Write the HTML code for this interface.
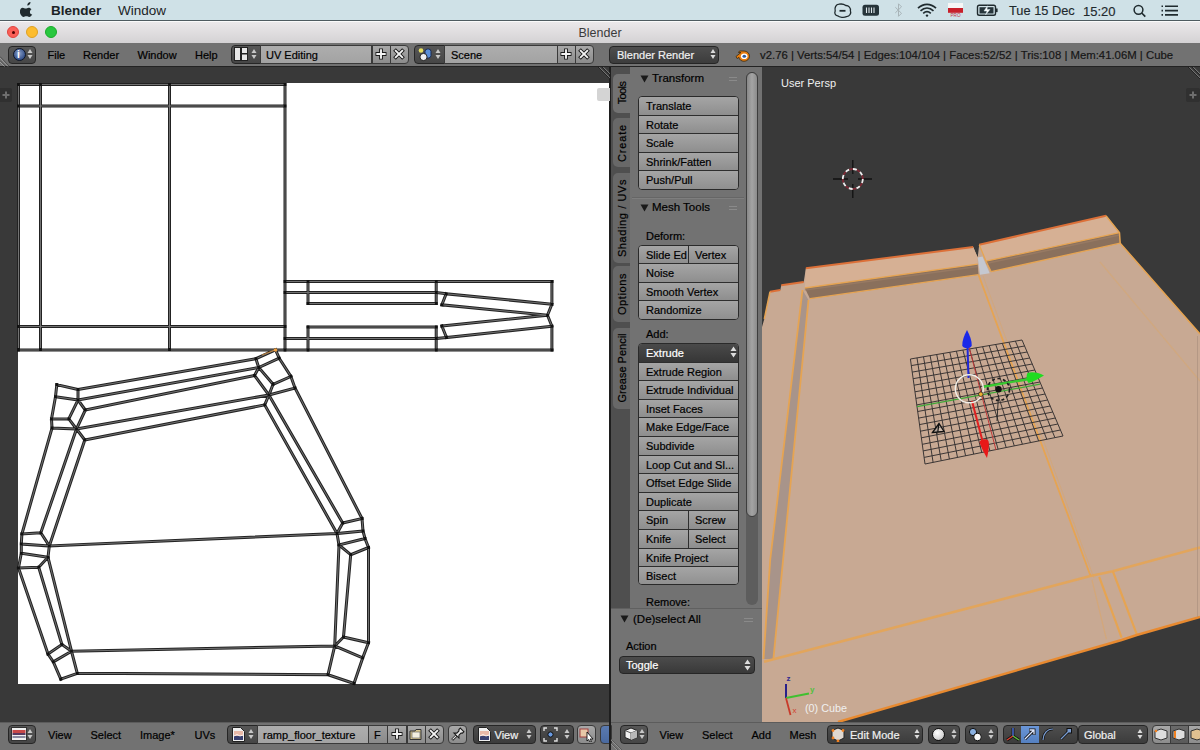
<!DOCTYPE html>
<html><head><meta charset="utf-8">
<style>
*{margin:0;padding:0;box-sizing:border-box}
html,body{width:1200px;height:750px;overflow:hidden;background:#393939;font-family:"Liberation Sans",sans-serif}
.a{position:absolute}
.t{position:absolute;white-space:nowrap;line-height:1}
.hdr{background:#727272}
.grp{position:absolute;border:1px solid #2a2a2a;border-radius:4px;overflow:hidden;background:#8f8f8f}
.grp div{position:absolute;left:0;right:0;height:18.6px;background:linear-gradient(#a5a5a5,#8e8e8e);border-bottom:1px solid #2e2e2e}
.grp span{position:absolute;left:7px;top:4px;font-size:11px;color:#000;white-space:nowrap;line-height:1;-webkit-text-stroke:0.2px currentColor}
.ht{position:absolute;font-size:11px;color:#000;white-space:nowrap;line-height:1;-webkit-text-stroke:0.2px currentColor}
.dd{position:absolute;border:1px solid #262626;border-radius:4px;background:linear-gradient(#4c4c4c,#393939)}
.fld{position:absolute;border:1px solid #3a3a3a;background:linear-gradient(#adadad,#a3a3a3)}
.ib{position:absolute;border:1px solid #3a3a3a;border-radius:4px;background:linear-gradient(#a8a8a8,#8c8c8c)}
.tab{position:absolute;left:613px;width:18px;background:#686868;border-radius:5px 0 0 5px}
.tab span{position:absolute;left:50%;top:50%;transform:translate(-50%,-50%) rotate(-90deg);font-size:11px;color:#000;-webkit-text-stroke:0.2px #000;white-space:nowrap;line-height:1}
.arr{position:absolute;width:6px;height:12px}
</style></head><body>
<!-- MENUBAR -->
<div class="a" style="left:0;top:0;width:1200px;height:21px;background:#cfe1e7;border-bottom:1px solid #4f5b60"></div>
<svg class="a" style="left:19.5px;top:1px" width="14" height="16" viewBox="0 0 14 16"><path d="M10.5 1c.1 1-.3 1.9-.9 2.6-.6.7-1.5 1.1-2.3 1-.1-.9.3-1.9.9-2.5C8.8 1.4 9.700 1 10.5 1zM13.2 11.6c-.4.9-.6 1.300-1.100 2.100-.7 1.100-1.700 2.300-2.900 2.300-1.100 0-1.300-.7-2.800-.7s-1.800.7-2.800.7C2.400 16 1.500 14.900.8 13.800-1.100 10.900.1 6.800 2.700 6.700c1.200 0 2 .8 3 .8s1.700-.8 3-.8c1 0 2.100.6 2.800 1.500-2.400 1.400-2 4.900.7 5.400z" fill="#1f2a2e"/></svg>
<div class="t" style="left:51px;top:4px;font-size:13.5px;font-weight:bold;color:#1b2326">Blender</div>
<div class="t" style="left:118px;top:4px;font-size:13.5px;color:#1b2326">Window</div>
<div class="t" style="left:1009px;top:5px;font-size:12.8px;color:#1f2a2e;-webkit-text-stroke:0.15px #1f2a2e">Tue 15 Dec</div><div class="t" style="left:1083px;top:5px;font-size:13px;color:#1f2a2e;-webkit-text-stroke:0.15px #1f2a2e">15:20</div>
<svg class="a" style="left:830px;top:0" width="175" height="20">
<path d="M9 4.2C12 3.600 14.500 4.500 15.800 5.500C18.700 5.400 21 8 20.400 10.800C21.300 13 20 16.600 16.500 16.700C14 17.800 9.500 17.500 7.600 15.800C5 15.600 4.300 13 5.200 11C4.300 7.200 6 4.600 9 4.200Z" fill="none" stroke="#1f2a2e" stroke-width="1.3"/>
<path d="M9.5 10.8H15.500" stroke="#1f2a2e" stroke-width="1.8"/>
<rect x="32.500" y="4.800" width="16.500" height="11" rx="2.500" fill="#26343a"/>
<path d="M36.500 7.500V13M39 7.500V13M41.500 7.500V13M44 7.500V13" stroke="#dfe8ec" stroke-width="1.100"/>
<path d="M65.300 7.200L71.500 13.300L68.500 16.300V3.800L71.500 6.800L65.300 12.900" fill="none" stroke="#a8b4b8" stroke-width="1"/>
<path d="M88 8.200C93.500 3 100.500 3 106 8.200" fill="none" stroke="#1f2a2e" stroke-width="1.700"/>
<path d="M90.500 10.800C94.500 7.300 99.500 7.300 103.500 10.800" fill="none" stroke="#1f2a2e" stroke-width="1.700"/>
<path d="M93.200 13.300C95.600 11.300 98.400 11.300 100.800 13.300" fill="none" stroke="#1f2a2e" stroke-width="1.700"/>
<circle cx="97" cy="15.600" r="1.200" fill="#1f2a2e"/>
<rect x="118" y="3" width="15" height="5" fill="#f6f6f6"/>
<rect x="118" y="8" width="15" height="4.800" fill="#c8202a"/>
<text x="125.500" y="17.300" font-size="4.600" font-family="Liberation Sans" fill="#c03040" text-anchor="middle">PRO</text>
<rect x="147.500" y="5.300" width="18" height="10" rx="1.800" fill="none" stroke="#1f2a2e" stroke-width="1.400"/>
<rect x="166" y="8.500" width="1.600" height="3.600" fill="#1f2a2e"/>
<path d="M149.500 7.200H163.500V13.500H149.500Z" fill="#26343a"/>
<path d="M157.500 5.800L154 11H157L155.500 15L160 9.500H157Z" fill="#fff" stroke="#cfe1e7" stroke-width="0.500"/>
</svg>
<svg class="a" style="left:1130px;top:2px" width="52" height="18">
<circle cx="8.500" cy="7.800" r="4.400" fill="none" stroke="#1f2a2e" stroke-width="1.500"/>
<path d="M11.700 11L15.300 14.600" stroke="#1f2a2e" stroke-width="1.700"/>
<path d="M35 4.300H48M35 8.600H48M35 12.900H48" stroke="#1f2a2e" stroke-width="1.600"/>
<path d="M31.500 4.300H33M31.500 8.600H33M31.500 12.900H33" stroke="#1f2a2e" stroke-width="1.600"/>
</svg>

<!-- TITLEBAR -->
<div class="a" style="left:0;top:21px;width:1200px;height:22px;background:linear-gradient(#ebe8ea,#d4d2d4);border-top:1px solid #fafafa"></div>
<div class="a" style="left:7px;top:26px;width:12px;height:12px;border-radius:50%;background:#fb5f57;border:1px solid #e0443e"></div>
<div class="a" style="left:11.5px;top:30.5px;width:3px;height:3px;border-radius:50%;background:#4d0000"></div>
<div class="a" style="left:26px;top:26px;width:12px;height:12px;border-radius:50%;background:#fdbc2e;border:1px solid #dea123"></div>
<div class="a" style="left:44.5px;top:26px;width:12px;height:12px;border-radius:50%;background:#29c73f;border:1px solid #1aab29"></div>
<div class="t" style="left:0;width:1200px;text-align:center;top:27px;font-size:12.5px;color:#3a3a3a;padding-left:-2px">Blender</div>
<!-- TOP HEADER -->
<div class="a hdr" style="left:0;top:43px;width:1200px;height:24px;border-bottom:1px solid #232323"></div>
<!-- corner split widget -->
<svg class="a" style="left:0;top:54px" width="12" height="13"><path d="M0 2.5L9 12M0 6.5L5.5 12" stroke="#4e4e4e" stroke-width="1"/><path d="M0 4L8 12.5M0 8L4.5 12.5" stroke="#a0a0a0" stroke-width="0.9"/></svg>
<!-- info editor btn -->
<div class="dd" style="left:8px;top:45.5px;width:28px;height:18px;background:linear-gradient(#575757,#464646)"></div>
<div class="a" style="left:12.5px;top:48px;width:13px;height:13px;border-radius:50%;background:radial-gradient(circle at 45% 40%,#8aa0c8,#34508a 70%);border:1.5px solid #0e1628"></div>
<div class="t" style="left:17px;top:49.5px;font-size:10px;font-weight:bold;color:#fff">i</div>
<svg class="a" style="left:27px;top:48px" width="6" height="12"><path d="M0.5 5L3 1L5.5 5ZM0.5 7L3 11L5.5 7Z" fill="#c8c8c8"/></svg>
<div class="ht" style="left:47.5px;top:50px">File</div>
<div class="ht" style="left:83px;top:50px">Render</div>
<div class="ht" style="left:137.5px;top:50px">Window</div>
<div class="ht" style="left:195px;top:50px">Help</div>
<!-- layout -->
<div class="dd" style="left:230.5px;top:45px;width:32px;height:18.5px;border-radius:4px 0 0 4px;background:linear-gradient(#575757,#464646)"></div>
<svg class="a" style="left:234px;top:47px" width="15" height="14"><rect x="0.5" y="0.5" width="6" height="13" fill="#e8e8e8" stroke="#222" stroke-width="1"/><rect x="7.5" y="0.5" width="6" height="6" fill="#e8e8e8" stroke="#222"/><rect x="7.5" y="7" width="6" height="6.5" fill="#e8e8e8" stroke="#222"/></svg>
<svg class="a" style="left:251px;top:48px" width="6" height="12"><path d="M0.5 5L3 1L5.5 5ZM0.5 7L3 11L5.5 7Z" fill="#c8c8c8"/></svg>
<div class="fld" style="left:260px;top:45px;width:112px;height:18.5px"></div>
<div class="ht" style="left:266px;top:50px">UV Editing</div>
<div class="ib" style="left:371.5px;top:45px;width:19px;height:18.5px;border-radius:0"></div>
<div class="ib" style="left:390px;top:45px;width:18.5px;height:18.5px;border-radius:0 4px 4px 0"></div>
<svg class="a" style="left:374px;top:47px" width="14" height="14"><path d="M7 1.5V12.5M1.5 7H12.5" stroke="#1a1a1a" stroke-width="3.8"/><path d="M7 2.3V11.7M2.3 7H11.7" stroke="#f4f4f4" stroke-width="1.9"/></svg>
<svg class="a" style="left:392px;top:47px" width="14" height="14"><path d="M2.5 2.5L11.5 11.5M11.5 2.5L2.5 11.5" stroke="#1a1a1a" stroke-width="3.8"/><path d="M3.1 3.1L10.9 10.9M10.9 3.1L3.1 10.9" stroke="#f4f4f4" stroke-width="1.9"/></svg>
<!-- scene -->
<div class="dd" style="left:414px;top:45px;width:31px;height:18.5px;border-radius:4px 0 0 4px;background:linear-gradient(#575757,#464646)"></div>
<svg class="a" style="left:417px;top:47px" width="16" height="15"><circle cx="4" cy="3.5" r="2.3" fill="#e8e060"/><rect x="8" y="2" width="6" height="9" rx="2.5" fill="#5b8fd8" stroke="#1b2b50"/><circle cx="6.5" cy="10" r="3.6" fill="#f0f0f0" stroke="#222"/></svg>
<svg class="a" style="left:435px;top:48px" width="6" height="12"><path d="M0.5 5L3 1L5.5 5ZM0.5 7L3 11L5.5 7Z" fill="#c8c8c8"/></svg>
<div class="fld" style="left:443.5px;top:45px;width:114px;height:18.5px"></div>
<div class="ht" style="left:451px;top:50px">Scene</div>
<div class="ib" style="left:556.5px;top:45px;width:19px;height:18.5px;border-radius:0"></div>
<div class="ib" style="left:575px;top:45px;width:18.5px;height:18.5px;border-radius:0 4px 4px 0"></div>
<svg class="a" style="left:559px;top:47px" width="14" height="14"><path d="M7 1.5V12.5M1.5 7H12.5" stroke="#1a1a1a" stroke-width="3.8"/><path d="M7 2.3V11.7M2.3 7H11.7" stroke="#f4f4f4" stroke-width="1.9"/></svg>
<svg class="a" style="left:577px;top:47px" width="14" height="14"><path d="M2.5 2.5L11.5 11.5M11.5 2.5L2.5 11.5" stroke="#1a1a1a" stroke-width="3.8"/><path d="M3.1 3.1L10.9 10.9M10.9 3.1L3.1 10.9" stroke="#f4f4f4" stroke-width="1.9"/></svg>
<!-- render engine -->
<div class="dd" style="left:609px;top:45.5px;width:110px;height:18px;background:linear-gradient(#4e4e4e,#3c3c3c)"></div>
<div class="ht" style="left:617px;top:50px;color:#f0f0f0">Blender Render</div>
<svg class="a" style="left:710px;top:48px" width="6" height="12"><path d="M0.5 5L3 1L5.5 5ZM0.5 7L3 11L5.5 7Z" fill="#dcdcdc"/></svg>
<!-- blender logo -->
<svg class="a" style="left:735px;top:48px" width="16" height="14" viewBox="0 0 16 14"><path d="M1 8.5L6 4.5L3.5 4.5L4.5 3L9 3C12 3 14.5 5.3 14.5 8.2C14.5 11 12 13.3 9 13.3C6.3 13.3 4.2 11.6 3.9 9.3L2.2 10.600Z" fill="#e87d0d" stroke="#3a2a10" stroke-width="0.8"/><ellipse cx="9.2" cy="8.3" rx="3.3" ry="2.8" fill="#fff"/><ellipse cx="9.3" cy="8.3" rx="1.8" ry="1.5" fill="#2f5b9b"/></svg>
<div class="ht" style="left:760px;top:50px;font-size:11.35px;color:#161616">v2.76 | Verts:54/54 | Edges:104/104 | Faces:52/52 | Tris:108 | Mem:41.06M | Cube</div>

<!-- UV editor -->
<div class="a" style="left:0;top:67px;width:610px;height:655px;background:#393939"></div>
<div class="a" style="left:18px;top:83px;width:592px;height:601px;background:#fff"></div>
<svg width="1200" height="750" style="position:absolute;left:0;top:0">
<path d="M56.8 384.7L78.0 389.5M56.8 384.7L55.5 396.7M55.5 396.7L78.0 400.0M78.0 389.5L78.0 400.0M78.0 400.0L85.3 410.0M78.0 400.0L68.8 418.8M68.8 418.8L51.5 419.0M55.5 396.7L51.5 419.0M51.5 419.0L52.0 428.0M52.0 428.0L76.5 429.0M68.8 418.8L76.5 429.0M85.3 410.0L76.5 429.0M76.5 429.0L84.8 440.0M78.0 389.5L255.9 358.7M78.0 400.0L258.7 367.5M85.3 410.0L254.5 375.5M76.5 429.0L268.9 395.0M84.8 440.0L264.7 404.9M255.9 358.7L275.5 349.8M275.5 349.8L279.2 358.2M255.9 358.7L258.7 367.5M258.7 367.5L279.2 358.2M258.7 367.5L254.5 375.5M258.7 367.5L273.1 384.3M279.2 358.2L290.9 376.4M290.9 376.4L273.1 384.3M273.1 384.3L268.9 395.0M290.9 376.4L295.0 388.0M295.0 388.0L268.9 395.0M254.5 375.5L268.9 395.0M268.9 395.0L264.7 404.9M295.0 388.0L362.0 518.5M268.9 395.0L342.7 523.0M264.7 404.9L337.0 533.5M362.0 518.5L342.7 523.0M362.0 518.5L363.0 531.0M342.7 523.0L337.0 533.5M337.0 533.5L363.0 531.0M363.0 531.0L365.0 538.5M337.0 533.5L339.0 545.0M339.0 545.0L365.0 538.5M365.0 538.5L368.5 547.5M339.0 545.0L350.7 554.7M350.7 554.7L368.5 547.5M350.7 554.7L343.5 637.0M368.5 547.5L368.5 642.7M339.0 545.0L334.7 646.0M343.5 637.0L368.5 642.7M343.5 637.0L334.7 646.0M334.7 646.0L362.7 657.9M368.5 642.7L362.7 657.9M334.7 646.0L328.0 674.7M362.7 657.9L354.0 683.5M328.0 674.7L354.0 683.5M52.0 428.0L21.9 534.0M76.5 429.0L40.8 532.8M84.8 440.0L49.3 545.9M21.9 534.0L40.8 532.8M21.9 534.0L21.3 544.0M40.8 532.8L49.3 545.9M21.3 544.0L49.3 545.9M21.3 544.0L21.3 553.3M49.3 545.9L48.0 557.3M21.3 553.3L48.0 557.3M21.3 553.3L18.5 568.0M48.0 557.3L38.7 567.2M18.5 568.0L38.7 567.2M18.5 568.0L48.0 654.0M38.7 567.2L61.9 644.5M48.0 557.3L71.5 651.2M61.9 644.5L71.5 651.2M61.9 644.5L48.0 654.0M48.0 654.0L53.3 661.9M71.5 651.2L53.3 661.9M53.3 661.9L60.8 679.2M71.5 651.2L77.3 673.3M60.8 679.2L77.3 673.3M49.3 545.9L337.0 533.5M71.5 651.2L334.7 646.0M77.3 673.3L328.0 674.7M436.2 292.5L446.2 293.8M446.2 293.8L551.9 304.2M446.2 293.8L441.9 304.8M441.9 304.8L547.5 315.2M551.9 304.2L547.5 315.2M547.5 315.2L551.9 326.2M547.5 315.2L441.9 326.0M441.9 326.0L446.5 337.5M446.5 337.5L551.9 326.2M436.2 338.5L446.5 337.5M18.5 84.5L18.5 349.5M40.5 84.5L40.5 349.5M169.5 84.5L169.5 349.5M285.0 84.5L285.0 350.0M18.5 84.5L285.0 84.5M18.5 106.0L285.0 106.0M18.5 326.5L285.0 326.5M18.5 350.0L552.0 350.0M285.0 281.5L552.0 281.5M285.0 292.5L436.2 292.5M308.0 303.5L436.2 303.5M308.0 327.0L436.2 327.0M285.0 338.5L436.2 338.5M308.0 281.5L308.0 303.5M308.0 327.0L308.0 350.0M436.2 281.5L436.2 303.5M436.2 327.0L436.2 350.0M551.9 281.5L551.9 304.2M551.9 326.2L551.9 350.0" stroke="#222" stroke-width="3" fill="none" stroke-linecap="square"/>
<path d="M56.8 384.7L78.0 389.5M56.8 384.7L55.5 396.7M55.5 396.7L78.0 400.0M78.0 389.5L78.0 400.0M78.0 400.0L85.3 410.0M78.0 400.0L68.8 418.8M68.8 418.8L51.5 419.0M55.5 396.7L51.5 419.0M51.5 419.0L52.0 428.0M52.0 428.0L76.5 429.0M68.8 418.8L76.5 429.0M85.3 410.0L76.5 429.0M76.5 429.0L84.8 440.0M78.0 389.5L255.9 358.7M78.0 400.0L258.7 367.5M85.3 410.0L254.5 375.5M76.5 429.0L268.9 395.0M84.8 440.0L264.7 404.9M255.9 358.7L275.5 349.8M275.5 349.8L279.2 358.2M255.9 358.7L258.7 367.5M258.7 367.5L279.2 358.2M258.7 367.5L254.5 375.5M258.7 367.5L273.1 384.3M279.2 358.2L290.9 376.4M290.9 376.4L273.1 384.3M273.1 384.3L268.9 395.0M290.9 376.4L295.0 388.0M295.0 388.0L268.9 395.0M254.5 375.5L268.9 395.0M268.9 395.0L264.7 404.9M295.0 388.0L362.0 518.5M268.9 395.0L342.7 523.0M264.7 404.9L337.0 533.5M362.0 518.5L342.7 523.0M362.0 518.5L363.0 531.0M342.7 523.0L337.0 533.5M337.0 533.5L363.0 531.0M363.0 531.0L365.0 538.5M337.0 533.5L339.0 545.0M339.0 545.0L365.0 538.5M365.0 538.5L368.5 547.5M339.0 545.0L350.7 554.7M350.7 554.7L368.5 547.5M350.7 554.7L343.5 637.0M368.5 547.5L368.5 642.7M339.0 545.0L334.7 646.0M343.5 637.0L368.5 642.7M343.5 637.0L334.7 646.0M334.7 646.0L362.7 657.9M368.5 642.7L362.7 657.9M334.7 646.0L328.0 674.7M362.7 657.9L354.0 683.5M328.0 674.7L354.0 683.5M52.0 428.0L21.9 534.0M76.5 429.0L40.8 532.8M84.8 440.0L49.3 545.9M21.9 534.0L40.8 532.8M21.9 534.0L21.3 544.0M40.8 532.8L49.3 545.9M21.3 544.0L49.3 545.9M21.3 544.0L21.3 553.3M49.3 545.9L48.0 557.3M21.3 553.3L48.0 557.3M21.3 553.3L18.5 568.0M48.0 557.3L38.7 567.2M18.5 568.0L38.7 567.2M18.5 568.0L48.0 654.0M38.7 567.2L61.9 644.5M48.0 557.3L71.5 651.2M61.9 644.5L71.5 651.2M61.9 644.5L48.0 654.0M48.0 654.0L53.3 661.9M71.5 651.2L53.3 661.9M53.3 661.9L60.8 679.2M71.5 651.2L77.3 673.3M60.8 679.2L77.3 673.3M49.3 545.9L337.0 533.5M71.5 651.2L334.7 646.0M77.3 673.3L328.0 674.7M436.2 292.5L446.2 293.8M446.2 293.8L551.9 304.2M446.2 293.8L441.9 304.8M441.9 304.8L547.5 315.2M551.9 304.2L547.5 315.2M547.5 315.2L551.9 326.2M547.5 315.2L441.9 326.0M441.9 326.0L446.5 337.5M446.5 337.5L551.9 326.2M436.2 338.5L446.5 337.5M18.5 84.5L18.5 349.5M40.5 84.5L40.5 349.5M169.5 84.5L169.5 349.5M285.0 84.5L285.0 350.0M18.5 84.5L285.0 84.5M18.5 106.0L285.0 106.0M18.5 326.5L285.0 326.5M18.5 350.0L552.0 350.0M285.0 281.5L552.0 281.5M285.0 292.5L436.2 292.5M308.0 303.5L436.2 303.5M308.0 327.0L436.2 327.0M285.0 338.5L436.2 338.5M308.0 281.5L308.0 303.5M308.0 327.0L308.0 350.0M436.2 281.5L436.2 303.5M436.2 327.0L436.2 350.0M551.9 281.5L551.9 304.2M551.9 326.2L551.9 350.0" stroke="#727272" stroke-width="1" fill="none" stroke-linecap="butt"/>
<path d="M277.8 356.8h2.8v2.8h-2.8zM337.6 543.6h2.8v2.8h-2.8zM283.6 280.1h2.8v2.8h-2.8zM83.4 438.6h2.8v2.8h-2.8zM267.5 393.6h2.8v2.8h-2.8zM289.5 375.0h2.8v2.8h-2.8zM253.1 374.1h2.8v2.8h-2.8zM46.6 555.9h2.8v2.8h-2.8zM283.6 337.1h2.8v2.8h-2.8zM17.1 325.1h2.8v2.8h-2.8zM283.6 83.1h2.8v2.8h-2.8zM50.6 426.6h2.8v2.8h-2.8zM50.1 417.6h2.8v2.8h-2.8zM59.4 677.8h2.8v2.8h-2.8zM367.1 546.1h2.8v2.8h-2.8zM263.3 403.5h2.8v2.8h-2.8zM333.3 644.6h2.8v2.8h-2.8zM83.9 408.6h2.8v2.8h-2.8zM17.1 348.1h2.8v2.8h-2.8zM39.4 531.4h2.8v2.8h-2.8zM440.5 324.6h2.8v2.8h-2.8zM70.1 649.8h2.8v2.8h-2.8zM54.1 395.3h2.8v2.8h-2.8zM550.5 324.9h2.8v2.8h-2.8zM37.3 565.8h2.8v2.8h-2.8zM168.1 83.1h2.8v2.8h-2.8zM17.1 566.6h2.8v2.8h-2.8zM550.6 348.6h2.8v2.8h-2.8zM75.1 427.6h2.8v2.8h-2.8zM168.1 348.1h2.8v2.8h-2.8zM283.6 325.1h2.8v2.8h-2.8zM434.9 348.6h2.8v2.8h-2.8zM20.5 532.6h2.8v2.8h-2.8zM283.6 291.1h2.8v2.8h-2.8zM306.6 302.1h2.8v2.8h-2.8zM17.1 104.6h2.8v2.8h-2.8zM363.6 537.1h2.8v2.8h-2.8zM39.1 83.1h2.8v2.8h-2.8zM550.6 280.1h2.8v2.8h-2.8zM367.1 641.3h2.8v2.8h-2.8zM257.3 366.1h2.8v2.8h-2.8zM326.6 673.3h2.8v2.8h-2.8zM434.9 325.6h2.8v2.8h-2.8zM335.6 532.1h2.8v2.8h-2.8zM434.9 280.1h2.8v2.8h-2.8zM75.9 671.9h2.8v2.8h-2.8zM271.7 382.9h2.8v2.8h-2.8zM434.9 337.1h2.8v2.8h-2.8zM434.9 291.1h2.8v2.8h-2.8zM283.6 104.6h2.8v2.8h-2.8zM360.6 517.1h2.8v2.8h-2.8zM46.6 652.6h2.8v2.8h-2.8zM17.1 348.6h2.8v2.8h-2.8zM341.3 521.6h2.8v2.8h-2.8zM55.4 383.3h2.8v2.8h-2.8zM19.9 551.9h2.8v2.8h-2.8zM47.9 544.5h2.8v2.8h-2.8zM361.6 529.6h2.8v2.8h-2.8zM19.9 542.6h2.8v2.8h-2.8zM76.6 388.1h2.8v2.8h-2.8zM349.3 553.3h2.8v2.8h-2.8zM254.5 357.3h2.8v2.8h-2.8zM39.1 348.1h2.8v2.8h-2.8zM51.9 660.5h2.8v2.8h-2.8zM352.6 682.1h2.8v2.8h-2.8zM60.5 643.1h2.8v2.8h-2.8zM306.6 348.6h2.8v2.8h-2.8zM550.5 348.6h2.8v2.8h-2.8zM440.5 303.4h2.8v2.8h-2.8zM76.6 398.6h2.8v2.8h-2.8zM550.5 302.9h2.8v2.8h-2.8zM67.4 417.4h2.8v2.8h-2.8zM445.1 336.1h2.8v2.8h-2.8zM444.9 292.4h2.8v2.8h-2.8zM361.3 656.5h2.8v2.8h-2.8zM283.6 348.6h2.8v2.8h-2.8zM293.6 386.6h2.8v2.8h-2.8zM306.6 325.6h2.8v2.8h-2.8zM274.1 348.4h2.8v2.8h-2.8zM306.6 280.1h2.8v2.8h-2.8zM546.1 313.9h2.8v2.8h-2.8zM17.1 83.1h2.8v2.8h-2.8zM434.9 302.1h2.8v2.8h-2.8zM342.1 635.6h2.8v2.8h-2.8zM550.5 280.1h2.8v2.8h-2.8z" fill="#111"/>
<path d="M275.5 349.8L262 355" stroke="#d08a3a" stroke-width="1.2" opacity="0.8"/><circle cx="275.5" cy="350" r="1.8" fill="#f0a040"/>
</svg>
<!-- BOTTOM HEADER -->
<div class="a hdr" style="left:0;top:722px;width:1200px;height:28px;border-top:1px solid #5c5c5c"></div>
<!-- UV editor header -->
<div class="dd" style="left:8px;top:725px;width:28px;height:18.5px;background:linear-gradient(#575757,#464646)"></div>
<svg class="a" style="left:11px;top:727px" width="16" height="14"><rect x="0.5" y="0.5" width="15" height="13" fill="#f0f0f0" stroke="#333"/><rect x="1.5" y="3" width="13" height="3" fill="#c84848"/><rect x="1.5" y="6" width="13" height="2" fill="#5a3a60"/><rect x="1.5" y="9" width="13" height="2" fill="#8a8aa0"/></svg>
<svg class="a" style="left:27px;top:728px" width="6" height="12"><path d="M0.5 5L3 1L5.5 5ZM0.5 7L3 11L5.5 7Z" fill="#c8c8c8"/></svg>
<div class="ht" style="left:48px;top:730px">View</div>
<div class="ht" style="left:90.5px;top:730px">Select</div>
<div class="ht" style="left:140px;top:730px">Image*</div>
<div class="ht" style="left:194.5px;top:730px">UVs</div>
<div class="dd" style="left:226.5px;top:725px;width:32px;height:18.5px;border-radius:4px 0 0 4px;background:linear-gradient(#575757,#464646)"></div>
<svg class="a" style="left:232px;top:727px" width="13" height="15"><path d="M0.5 0.5H8.5L12.5 4.5V14.5H0.5Z" fill="#f0f0f0" stroke="#222"/><rect x="2" y="4" width="9" height="5" fill="#e8b8a8"/><rect x="2" y="9" width="9" height="4" fill="#3a4070"/><path d="M2 9L5 7.5L8 9L11 8" stroke="#fff" stroke-width="0.8" fill="none"/></svg>
<svg class="a" style="left:248px;top:728px" width="6" height="12"><path d="M0.5 5L3 1L5.5 5ZM0.5 7L3 11L5.5 7Z" fill="#c8c8c8"/></svg>
<div class="fld" style="left:257px;top:725px;width:112px;height:18.5px"></div>
<div class="ht" style="left:263px;top:730px">ramp_floor_texture</div>
<div class="ib" style="left:368px;top:725px;width:19.5px;height:18.5px;border-radius:0;background:linear-gradient(#9c9c9c,#8a8a8a)"></div>
<div class="ht" style="left:374px;top:730px">F</div>
<div class="ib" style="left:387px;top:725px;width:20px;height:18.5px;border-radius:0"></div>
<div class="ib" style="left:406.5px;top:725px;width:19px;height:18.5px;border-radius:0"></div>
<div class="ib" style="left:425px;top:725px;width:18.5px;height:18.5px;border-radius:0 4px 4px 0"></div>
<svg class="a" style="left:390px;top:727px" width="14" height="14"><path d="M7 1.5V12.5M1.5 7H12.5" stroke="#1a1a1a" stroke-width="3.8"/><path d="M7 2.3V11.7M2.3 7H11.7" stroke="#f4f4f4" stroke-width="1.9"/></svg>
<svg class="a" style="left:409px;top:727px" width="15" height="14"><path d="M1 4H6L7 2.5H12V12.5H1Z" fill="#d8c890" stroke="#333"/><rect x="3" y="5" width="8" height="6" fill="#f2efe0" stroke="#555" stroke-width="0.6"/></svg>
<svg class="a" style="left:427px;top:727px" width="14" height="14"><path d="M2.5 2.5L11.5 11.5M11.5 2.5L2.5 11.5" stroke="#1a1a1a" stroke-width="3.8"/><path d="M3.1 3.1L10.9 10.9M10.9 3.1L3.1 10.9" stroke="#f4f4f4" stroke-width="1.9"/></svg>
<div class="ib" style="left:448px;top:725px;width:19px;height:18.5px"></div>
<svg class="a" style="left:450px;top:727px" width="15" height="15"><g transform="rotate(45 7.5 7.5)"><path d="M7.5 9V15" stroke="#1a1a1a" stroke-width="2.6"/><path d="M7.5 9.5V14.5" stroke="#eee" stroke-width="1"/><path d="M5 1H10V3L9 4V7L11 9H4L6 7V4L5 3Z" fill="#e8e8e8" stroke="#1a1a1a" stroke-width="1.1"/></g></svg>
<div class="dd" style="left:472.5px;top:725px;width:63px;height:18.5px;background:linear-gradient(#4e4e4e,#3c3c3c)"></div>
<svg class="a" style="left:478px;top:727px" width="13" height="15"><path d="M0.5 0.5H8.5L12.5 4.5V14.5H0.5Z" fill="#f0f0f0" stroke="#222"/><rect x="2" y="4" width="9" height="5" fill="#e8b8a8"/><rect x="2" y="9" width="9" height="4" fill="#3a4070"/><path d="M2 9L5 7.5L8 9L11 8" stroke="#fff" stroke-width="0.8" fill="none"/></svg>
<div class="ht" style="left:494.5px;top:730px;color:#f0f0f0">View</div>
<svg class="a" style="left:526px;top:728px" width="6" height="12"><path d="M0.5 5L3 1L5.5 5ZM0.5 7L3 11L5.5 7Z" fill="#c8c8c8"/></svg>
<div class="dd" style="left:539.5px;top:725px;width:34px;height:18.5px;background:linear-gradient(#4e4e4e,#3c3c3c)"></div>
<svg class="a" style="left:543px;top:727px" width="15" height="15"><path d="M1 4V1H4M11 1H14V4M14 11V14H11M4 14H1V11" stroke="#e0e0e0" stroke-width="1.4" fill="none"/><circle cx="7.5" cy="7.5" r="2.6" fill="#6a9ae0" stroke="#111"/></svg>
<svg class="a" style="left:564px;top:728px" width="6" height="12"><path d="M0.5 5L3 1L5.5 5ZM0.5 7L3 11L5.5 7Z" fill="#c8c8c8"/></svg>
<div class="ib" style="left:577px;top:725px;width:19px;height:18.5px"></div>
<svg class="a" style="left:579px;top:727px" width="16" height="15"><rect x="1" y="2" width="8" height="8" fill="#e8c8a8" stroke="#a04040" stroke-width="1"/><path d="M8 5L14 12L11 12L12.5 14.5L11 15L9.5 12.5L8 14Z" fill="#fff" stroke="#111" stroke-width="0.9"/></svg>
<div class="ib" style="left:600px;top:725px;width:12px;height:18.5px;border-radius:4px 0 0 4px;background:linear-gradient(#5a7ab0,#4a6aa0)"></div>
<!-- 3D header -->
<svg class="a" style="left:611px;top:733px" width="14" height="17"><path d="M0 6L11 17M0 10L7 17" stroke="#5a5a5a" stroke-width="1"/><path d="M0 7L10 17M0 11L6 17" stroke="#9a9a9a" stroke-width="0.8"/></svg>
<div class="dd" style="left:620px;top:725px;width:28px;height:18.5px;background:linear-gradient(#575757,#464646)"></div>
<svg class="a" style="left:624px;top:727px" width="14" height="14"><path d="M7 1L13 3.5V10.5L7 13L1 10.5V3.5Z" fill="#f0f0f0" stroke="#222"/><path d="M1 3.5L7 6L13 3.5M7 6V13" stroke="#555" fill="none"/><path d="M7 6L13 3.5V10.5L7 13Z" fill="#b8b8b8"/></svg>
<svg class="a" style="left:639px;top:728px" width="6" height="12"><path d="M0.5 5L3 1L5.5 5ZM0.5 7L3 11L5.5 7Z" fill="#c8c8c8"/></svg>
<div class="ht" style="left:659.5px;top:730px">View</div>
<div class="ht" style="left:702px;top:730px">Select</div>
<div class="ht" style="left:751.5px;top:730px">Add</div>
<div class="ht" style="left:789.5px;top:730px">Mesh</div>
<div class="dd" style="left:827px;top:725px;width:96px;height:18.5px;background:linear-gradient(#4e4e4e,#3c3c3c)"></div>
<svg class="a" style="left:831px;top:727px" width="14" height="15"><path d="M7 1L13 3.5V11L7 14L1 11V3.5Z" fill="#e0d8d0" stroke="#222"/><circle cx="2" cy="3.5" r="1.4" fill="#f08020"/><circle cx="12" cy="3.5" r="1.4" fill="#f08020"/><circle cx="2" cy="11" r="1.4" fill="#f08020"/><circle cx="7" cy="14" r="1.4" fill="#f08020"/></svg>
<div class="ht" style="left:850px;top:730px;color:#f0f0f0">Edit Mode</div>
<svg class="a" style="left:914px;top:728px" width="6" height="12"><path d="M0.5 5L3 1L5.5 5ZM0.5 7L3 11L5.5 7Z" fill="#dcdcdc"/></svg>
<div class="dd" style="left:928px;top:725px;width:32px;height:18.5px;background:linear-gradient(#4e4e4e,#3c3c3c)"></div>
<div class="a" style="left:932px;top:728px;width:13px;height:13px;border-radius:50%;background:radial-gradient(circle at 40% 35%,#fff,#d8d8d8 60%,#999);border:1px solid #111"></div>
<svg class="a" style="left:951px;top:728px" width="6" height="12"><path d="M0.5 5L3 1L5.5 5ZM0.5 7L3 11L5.5 7Z" fill="#c8c8c8"/></svg>
<div class="dd" style="left:965px;top:725px;width:33px;height:18.5px;background:linear-gradient(#4e4e4e,#3c3c3c)"></div>
<svg class="a" style="left:968px;top:727px" width="15" height="15"><circle cx="5" cy="5" r="3.6" fill="#8ab0e0" stroke="#111"/><circle cx="9.5" cy="10" r="3.8" fill="#f8f8f8" stroke="#111"/></svg>
<svg class="a" style="left:988px;top:728px" width="6" height="12"><path d="M0.5 5L3 1L5.5 5ZM0.5 7L3 11L5.5 7Z" fill="#c8c8c8"/></svg>
<div class="dd" style="left:1003px;top:725px;width:75px;height:18.5px;background:linear-gradient(#4e4e4e,#3c3c3c)"></div>
<svg class="a" style="left:1005px;top:726px" width="16" height="16"><path d="M8 2V10L2 14M8 10L14 14" stroke="#111" stroke-width="2.8" fill="none"/><path d="M8 2V10" stroke="#4a70e0" stroke-width="1.4"/><path d="M8 10L2 14" stroke="#e04030" stroke-width="1.4"/><path d="M8 10L14 14" stroke="#60c040" stroke-width="1.4"/></svg>
<div class="a" style="left:1021px;top:725.5px;width:18px;height:17.5px;background:linear-gradient(#6a96d8,#5580c0)"></div>
<svg class="a" style="left:1023px;top:727px" width="14" height="14"><path d="M2 12L11 3M6 3H11V8" stroke="#111" stroke-width="3" fill="none"/><path d="M2 12L11 3M6.5 3H11V7.5" stroke="#dfe8ff" stroke-width="1.3" fill="none"/></svg>
<svg class="a" style="left:1041px;top:727px" width="14" height="14"><path d="M2 13C2 7 6 2 12 2" stroke="#111" stroke-width="2.6" fill="none"/><path d="M2 13C2 7 6 2 12 2" stroke="#7a9cd0" stroke-width="1.2" fill="none"/></svg>
<svg class="a" style="left:1059px;top:727px" width="14" height="14"><path d="M2 12L9 5" stroke="#111" stroke-width="2.6"/><rect x="8" y="1.5" width="4.5" height="4.5" fill="#7a9cd0" stroke="#111"/><path d="M2 12L9 5" stroke="#7a9cd0" stroke-width="1.2"/></svg>
<div class="dd" style="left:1077.5px;top:725px;width:70px;height:18.5px;background:linear-gradient(#4e4e4e,#3c3c3c)"></div>
<div class="ht" style="left:1084px;top:730px;color:#f0f0f0">Global</div>
<svg class="a" style="left:1137px;top:728px" width="6" height="12"><path d="M0.5 5L3 1L5.5 5ZM0.5 7L3 11L5.5 7Z" fill="#dcdcdc"/></svg>
<div class="ib" style="left:1152px;top:725px;width:18.5px;height:18.5px;border-radius:4px 0 0 4px"></div>
<div class="ib" style="left:1170px;top:725px;width:18.5px;height:18.5px;border-radius:0;background:linear-gradient(#6a6a6a,#5a5a5a)"></div>
<div class="ib" style="left:1188px;top:725px;width:18.5px;height:18.5px;border-radius:0"></div>
<svg class="a" style="left:1154px;top:727px" width="15" height="15"><path d="M7 2L13 4V11L7 13L1 11V4Z" fill="#ddd" stroke="#333"/><circle cx="2" cy="4" r="1.3" fill="#f08020"/></svg>
<svg class="a" style="left:1172px;top:727px" width="15" height="15"><path d="M7 2L13 4V11L7 13L1 11V4Z" fill="#ddd" stroke="#333"/><path d="M3 4V11" stroke="#f08020" stroke-width="2"/></svg>
<svg class="a" style="left:1190px;top:727px" width="15" height="15"><path d="M7 2L13 4V11L7 13L1 11V4Z" fill="#e0c090" stroke="#333"/></svg>

<!-- divider -->
<div class="a" style="left:609px;top:67px;width:2px;height:683px;background:#1e1e1e"></div>
<!-- tabs -->
<div class="a" style="left:611px;top:67px;width:20px;height:542px;background:#4f4f4f"></div>
<div class="tab" style="top:73.5px;height:39px;background:#727272"><span style="letter-spacing:-0.6px">Tools</span></div>
<div class="tab" style="top:118px;height:49px"><span style="letter-spacing:0.8px">Create</span></div>
<div class="tab" style="top:172.5px;height:90px"><span style="letter-spacing:0.6px">Shading / UVs</span></div>
<div class="tab" style="top:265.5px;height:56px"><span style="letter-spacing:0.6px">Options</span></div>
<div class="tab" style="top:327.5px;height:81px"><span>Grease Pencil</span></div>
<!-- panel -->
<div class="a" style="left:630px;top:67px;width:132px;height:542px;background:#727272"></div>
<!-- Transform header -->
<svg class="a" style="left:640px;top:75px" width="9" height="8"><path d="M0.5 0.5H8.5L4.5 7.5Z" fill="#1a1a1a"/></svg>
<div class="ht" style="left:652px;top:73px;font-size:11.5px">Transform</div>
<div class="a" style="left:729px;top:77px;width:8px;height:1px;background:#8a8a8a"></div>
<div class="a" style="left:729px;top:80px;width:8px;height:1px;background:#8a8a8a"></div>
<div class="grp" style="left:638px;top:96px;width:101px;height:94px">
<div style="top:0"><span>Translate</span></div>
<div style="top:18.6px"><span>Rotate</span></div>
<div style="top:37.2px"><span>Scale</span></div>
<div style="top:55.8px"><span>Shrink/Fatten</span></div>
<div style="top:74.4px;border-bottom:0"><span>Push/Pull</span></div>
</div>
<div class="a" style="left:632px;top:197px;width:112px;height:1px;background:#666"></div>
<div class="a" style="left:632px;top:198px;width:112px;height:1px;background:#7e7e7e"></div>
<!-- Mesh tools -->
<svg class="a" style="left:640px;top:204px" width="9" height="8"><path d="M0.5 0.5H8.5L4.5 7.5Z" fill="#1a1a1a"/></svg>
<div class="ht" style="left:652px;top:202px;font-size:11.5px">Mesh Tools</div>
<div class="a" style="left:729px;top:206px;width:8px;height:1px;background:#8a8a8a"></div>
<div class="a" style="left:729px;top:209px;width:8px;height:1px;background:#8a8a8a"></div>
<div class="ht" style="left:646px;top:231px">Deform:</div>
<div class="grp" style="left:638px;top:244.5px;width:101px;height:75px">
<div style="top:0"><span>Slide Ed</span><span style="left:56px">Vertex</span><b style="position:absolute;left:49px;top:0;width:1px;height:19px;background:#2e2e2e"></b></div>
<div style="top:18.6px"><span>Noise</span></div>
<div style="top:37.2px"><span>Smooth Vertex</span></div>
<div style="top:55.8px;border-bottom:0"><span>Randomize</span></div>
</div>
<div class="ht" style="left:646px;top:329px">Add:</div>
<div class="grp" style="left:638px;top:343px;width:101px;height:242px">
<div style="top:0;background:linear-gradient(#4a4a4a,#363636)"><span style="color:#fff">Extrude</span></div>
<div style="top:18.6px"><span>Extrude Region</span></div>
<div style="top:37.2px"><span>Extrude Individual</span></div>
<div style="top:55.8px"><span>Inset Faces</span></div>
<div style="top:74.4px"><span>Make Edge/Face</span></div>
<div style="top:93px"><span>Subdivide</span></div>
<div style="top:111.6px"><span>Loop Cut and Sl...</span></div>
<div style="top:130.2px"><span>Offset Edge Slide</span></div>
<div style="top:148.8px"><span>Duplicate</span></div>
<div style="top:167.4px"><span>Spin</span><span style="left:56px">Screw</span><b style="position:absolute;left:49px;top:0;width:1px;height:19px;background:#2e2e2e"></b></div>
<div style="top:186px"><span>Knife</span><span style="left:56px">Select</span><b style="position:absolute;left:49px;top:0;width:1px;height:19px;background:#2e2e2e"></b></div>
<div style="top:204.6px"><span>Knife Project</span></div>
<div style="top:223.2px;border-bottom:0"><span>Bisect</span></div>
</div>
<svg class="a" style="left:730px;top:346px" width="7" height="12"><path d="M0.5 5L3.5 0.5L6.5 5ZM0.5 7L3.5 11.5L6.5 7Z" fill="#ddd"/></svg>
<div class="ht" style="left:646px;top:596.5px">Remove:</div>
<!-- scrollbar -->
<div class="a" style="left:746px;top:72px;width:12px;height:533px;border-radius:6px;background:#5d5d5d"></div>
<div class="a" style="left:746px;top:72px;width:12px;height:445px;border-radius:6px;background:linear-gradient(90deg,#888,#a4a4a4 50%,#8c8c8c);border:1px solid #3e3e3e"></div>
<!-- operator panel -->
<div class="a" style="left:611px;top:608px;width:151px;height:114px;background:#737373;border-top:1px solid #606060"></div>
<svg class="a" style="left:620px;top:615px" width="9" height="8"><path d="M0.5 0.5H8.5L4.5 7.5Z" fill="#1a1a1a"/></svg>
<div class="ht" style="left:633px;top:614px;font-size:11.5px">(De)select All</div>
<div class="a" style="left:744px;top:618px;width:9px;height:1px;background:#8a8a8a"></div>
<div class="a" style="left:744px;top:621px;width:9px;height:1px;background:#8a8a8a"></div>
<div class="ht" style="left:626px;top:641px">Action</div>
<div class="dd" style="left:618.5px;top:656px;width:136px;height:18px"></div>
<div class="ht" style="left:626px;top:660px;color:#fff">Toggle</div>
<svg class="a" style="left:744px;top:659px" width="7" height="12"><path d="M0.5 5L3.5 0.5L6.5 5ZM0.5 7L3.5 11.5L6.5 7Z" fill="#ddd"/></svg>

<!-- 3d view -->
<div class="a" style="left:762px;top:67px;width:438px;height:655px;background:#393939;overflow:hidden"></div>
<svg class="a" style="left:0;top:0" width="1200" height="750">
<defs><clipPath id="vc"><rect x="762" y="67" width="438" height="655"/></clipPath></defs>
<g clip-path="url(#vc)">
<path d="M762 327L764.3 319L770 291.7L780.3 290L781.3 285.3L803.7 282.1L805.9 268.3L973.2 247L977.7 257.5L979.2 244.7L1106 215.8L1119.5 232L1120.2 243.2L1200 334V617L1136.8 635L1121.6 640L838 722H762Z" fill="#c8a993"/>
<path d="M805.9 268.3L973.2 247L977.7 257.5L977.7 264.2L804.8 288Z" fill="#d6b094"/>
<path d="M979.2 244.7L1106 215.8L1119.5 232.7L986 261.2Z" fill="#d6b094"/>
<path d="M804.8 288L977.7 264.2L978.5 274.7L810 298.7Z" fill="#8a705c"/>
<path d="M986 261.2L1119.5 232.7L1120.2 243.2L991.2 271.7Z" fill="#8a705c"/>
<path d="M804.8 290L977.7 266.5" stroke="#a08068" stroke-width="1.5" opacity="0.6"/>
<path d="M986 263.5L1119.5 235" stroke="#a08068" stroke-width="1.5" opacity="0.6"/>
<path d="M977.7 257.5L982.5 256.5L989.7 273.2L980 274.7Z" fill="#c5c8d0"/>
<path d="M802.5 290L808.5 300L773.4 659L763.5 659L770.2 560L777.4 500L787 420Z" fill="#a8948a"/>
<g stroke="#e6a452" fill="none" stroke-width="1.5">
<path d="M770 291.7L780.3 290M781.3 285.3L803.7 282.1M805.9 268.3L973.2 247M979.2 244.7L1106 215.8" stroke="#dc7038" stroke-width="2"/>
<path d="M1106 215.8L1119.5 232.7L1120.2 243.2L1200 334"/>
<path d="M804.8 288L977.7 264.2M986 261.2L1119.5 232.7M810 298.7L978.5 274.7M991.2 271.7L1120.2 243.2M979.2 244.7L986 261.2L991.2 271.7" stroke-width="1.3"/>
<path d="M978.5 274.7L1090.4 575.5" stroke-width="1.8"/>
<path d="M983 276L1094 578" stroke-width="1" opacity="0.35"/>
<path d="M764 661.8L1090.4 576L1112.8 571.2L1200 547.5" stroke-width="2.6" opacity="0.85"/>
<path d="M1099.2 576.8L1121.6 637.6M1112.8 571.2L1136.8 634.4" stroke-width="2.2"/>
<path d="M1092 580L1106.4 639.2" stroke-width="1.2" opacity="0.4"/>
<path d="M838 722L1121.6 640L1136.8 635L1200 617" stroke="#e88a30" stroke-width="2.4"/>
<path d="M802.5 290L787 420L777.4 500L770.2 560L763.5 659M808.5 300L773.4 659" stroke-width="1.8"/>
<path d="M764.3 319L770 291.7" />
<path d="M1100 262L1200 381" stroke-width="1.2" opacity="0.3"/>
</g>
<path d="M1197.5 336V617" stroke="#a88e7c" stroke-width="1" opacity="0.6"/>
<path d="M910.4 359.0L925.0 464.0M917.0 357.9L933.1 462.4M923.5 356.8L941.2 460.7M930.1 355.6L949.4 459.1M936.7 354.5L957.5 457.4M943.2 353.4L965.6 455.8M949.8 352.3L973.7 454.1M956.4 351.2L981.8 452.5M962.9 350.1L989.9 450.8M969.5 348.9L998.1 449.2M976.0 347.8L1006.2 447.5M982.6 346.7L1014.3 445.9M989.2 345.6L1022.4 444.2M995.7 344.5L1030.5 442.6M1002.3 343.4L1038.6 440.9M1008.9 342.2L1046.8 439.3M1015.4 341.1L1054.9 437.6M1022.0 340.0L1063.0 436.0M910.4 359.0L1022.0 340.0M911.3 365.6L1024.6 346.0M912.2 372.1L1027.1 352.0M913.1 378.7L1029.7 358.0M914.0 385.2L1032.2 364.0M915.0 391.8L1034.8 370.0M915.9 398.4L1037.4 376.0M916.8 404.9L1039.9 382.0M917.7 411.5L1042.5 388.0M918.6 418.1L1045.1 394.0M919.5 424.6L1047.6 400.0M920.4 431.2L1050.2 406.0M921.4 437.8L1052.8 412.0M922.3 444.3L1055.3 418.0M923.2 450.9L1057.9 424.0M924.1 457.4L1060.4 430.0M925.0 464.0L1063.0 436.0" stroke="#353030" stroke-width="0.95" fill="none"/>
<!-- gizmo -->
<path d="M969 347L996 450" stroke="#c03838" stroke-width="1"/>
<path d="M917 406.600L1040 384.200" stroke="#40a838" stroke-width="1.300"/>
<path d="M968.500 378L967.500 346" stroke="#2028d8" stroke-width="2"/>
<path d="M967 330C964 336 962 341 962.300 345.500C963 349 971 349 971.700 345.500C972 341 970 336 967 330Z" fill="#1a28e8"/>
<path d="M972 401L982.500 441" stroke="#e02020" stroke-width="2"/>
<path d="M987 458C983.500 452 980.500 446 979.500 442C980 439 987 438 988.500 441C989.500 445 988.500 451 987 458Z" fill="#e81818"/>
<path d="M983.300 386.700L1028 379.200" stroke="#38c830" stroke-width="2.400"/>
<path d="M1044 375.400C1038 372.500 1032 371.500 1027.500 373C1026 375.500 1026.500 381 1028.500 383C1033 382 1038 379 1044 375.400Z" fill="#20dc20"/>
<circle cx="969.300" cy="388.800" r="14" fill="none" stroke="#f2f0ea" stroke-width="1.400"/>
<circle cx="980.800" cy="394.200" r="2.300" fill="#f0b030" stroke="#222" stroke-width="0.800"/>
<circle cx="998.500" cy="389.500" r="11" fill="none" stroke="#1e1e1e" stroke-width="1.700" stroke-dasharray="3 2.600"/>
<circle cx="998.500" cy="389.300" r="3.200" fill="#0e0e0e"/>
<path d="M998.500 395L997 421" stroke="#222" stroke-width="0.900"/>
<path d="M932.500 432.500L939 423.500L944 431.500Z M939 423.500L937.500 433.500M932.500 432.500L944 431.500" stroke="#111" stroke-width="1.300" fill="#d8d0c8" fill-opacity="0.5"/>
</g>
<!-- 3D cursor -->
<g>
<path d="M852.8 160V174M852.8 184V198M833 179H848M858 179H872" stroke="#111" stroke-width="1.3"/>
<circle cx="852.8" cy="179" r="10" fill="none" stroke="#eee" stroke-width="1.8" stroke-dasharray="4.2 3.6"/>
<circle cx="852.8" cy="179" r="10" fill="none" stroke="#7e2a36" stroke-width="1.8" stroke-dasharray="3.6 4.2" stroke-dashoffset="3.6"/>
</g>
<!-- axes widget -->
<path d="M786 684V698" stroke="#28208a" stroke-width="2"/>
<path d="M786 698L809 693.5" stroke="#40c030" stroke-width="2"/>
<path d="M786 698L790.5 715" stroke="#c83a2a" stroke-width="1.8"/>
</svg>
<div class="t" style="left:786.5px;top:675px;font-size:8px;font-weight:bold;color:#302890">z</div>
<div class="t" style="left:810px;top:686px;font-size:8px;font-weight:bold;color:#50c040">y</div>
<div class="t" style="left:792.5px;top:707px;font-size:8px;color:#d04030">x</div>
<div class="t" style="left:805px;top:703px;font-size:10.8px;color:#f0f0f0">(0) Cube</div>
<svg class="a" style="left:1186px;top:67px" width="14" height="13"><path d="M2 0L14 12M6 0L14 8" stroke="#222" stroke-width="1"/><path d="M3.2 0L14 10.8M7.2 0L14 6.8" stroke="#8a8a8a" stroke-width="0.9"/></svg>
<svg class="a" style="left:596px;top:67px" width="14" height="13"><path d="M2 0L14 12M6 0L14 8" stroke="#222" stroke-width="1"/><path d="M3.2 0L14 10.8M7.2 0L14 6.8" stroke="#8a8a8a" stroke-width="0.9"/></svg>
<div class="t" style="left:781px;top:78px;font-size:11px;color:#f0f0f0">User Persp</div>
<div class="a" style="left:1186px;top:88px;width:14px;height:14px;background:#303030;border-radius:2px"></div>
<svg class="a" style="left:1188px;top:90px" width="10" height="10"><path d="M5 1.5V8.5M1.5 5H8.5" stroke="#6e6e6e" stroke-width="2"/></svg>
<div class="a" style="left:0;top:88px;width:12px;height:14px;background:#303030;border-radius:0 2px 2px 0"></div>
<svg class="a" style="left:1px;top:90px" width="10" height="10"><path d="M5 1.5V8.5M1.5 5H8.5" stroke="#6e6e6e" stroke-width="2"/></svg>
<div class="a" style="left:597px;top:88px;width:13px;height:13px;background:#d4d4d4;border-radius:2px 0 0 2px"></div>

</body></html>
